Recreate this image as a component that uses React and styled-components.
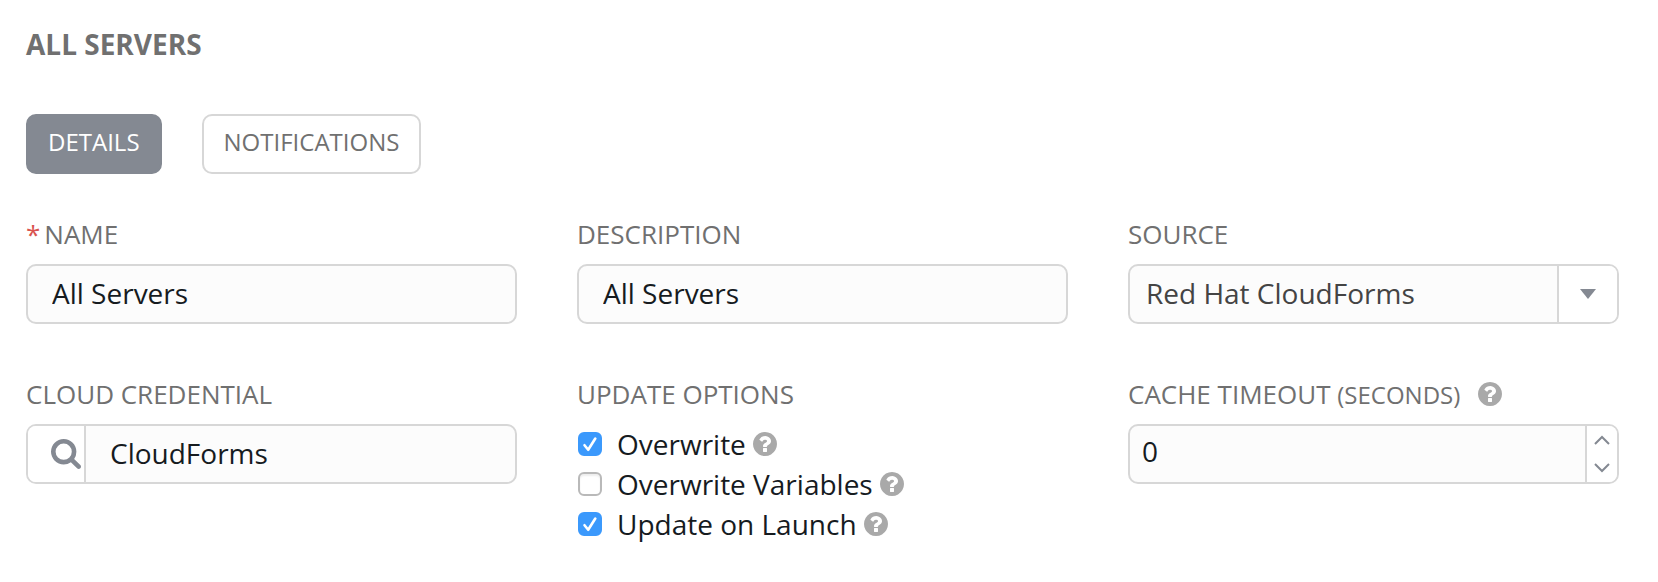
import React, { useState } from "react";
import styled, { createGlobalStyle, css } from "styled-components";

const GlobalStyle = createGlobalStyle`
  *, *::before, *::after { box-sizing: border-box; }
  body {
    margin: 0;
    background: #fff;
    color: #161b1f;
    font-family: "Open Sans", "Noto Sans", sans-serif;
    font-size: 28px;
  }
  button, input, select { font: inherit; color: inherit; margin: 0; }
`;

const Page = styled.main`
  padding: 24px 39px 24px 26px;
`;

const Title = styled.h1`
  margin: 0;
  font-size: 28px;
  line-height: 40px;
  font-weight: 700;
  color: #707070;
  text-transform: uppercase;
`;

const Tabs = styled.nav`
  display: flex;
  gap: 40px;
  margin-top: 50px;
`;

const Tab = styled.button`
  height: 60px;
  padding: 0 20px 4px;
  border: 2px solid ${(p) => (p.$active ? "#848992" : "#d7d7d7")};
  border-radius: 10px;
  background: ${(p) => (p.$active ? "#848992" : "#fff")};
  color: ${(p) => (p.$active ? "#fff" : "#707070")};
  font-size: 24px;
  line-height: 32px;
  text-transform: uppercase;
  cursor: pointer;
`;

const Form = styled.form`
  display: grid;
  grid-template-columns: repeat(3, minmax(0, 1fr));
  gap: 52px 60px;
  margin-top: 42px;
`;

const Field = styled.div`
  min-width: 0;
`;

const labelText = css`
  font-size: 26px;
  line-height: 36px;
  color: #707070;
  text-transform: uppercase;
`;

const LabelRow = styled.div`
  display: flex;
  align-items: center;
  gap: 18px;
  height: 36px;
  margin-bottom: 12px;
`;

const Label = styled.label`
  ${labelText}
`;

const Required = styled.span`
  margin-right: 4px;
  color: #d9534f;
`;

const Small = styled.span`
  font-size: 24px;
  line-height: 24px;
`;

const Control = styled.div`
  display: flex;
  height: 60px;
  border: 2px solid #d7d7d7;
  border-radius: 10px;
  background: #fcfcfc;
  overflow: hidden;

  &:focus-within { border-color: #848992; }
`;

const TextInput = styled.input`
  flex: 1;
  min-width: 0;
  padding: 0 24px 2px;
  border: 0;
  outline: 0;
  background: transparent;
`;

const NumberInput = styled(TextInput)`
  padding: 0 12px 6px;
  appearance: textfield;
  -moz-appearance: textfield;

  &::-webkit-inner-spin-button,
  &::-webkit-outer-spin-button { appearance: none; margin: 0; }
`;

const SelectControl = styled(Control)`
  display: grid;
  grid-template-columns: minmax(0, 1fr) 60px;
`;

const Select = styled.select`
  grid-area: 1 / 1 / 2 / 3;
  padding: 0 76px 2px 16px;
  border: 0;
  outline: 0;
  appearance: none;
  background: transparent;
  color: #444;
`;

const SelectArrow = styled.span`
  grid-area: 1 / 2;
  display: flex;
  align-items: center;
  justify-content: center;
  border-left: 2px solid #d7d7d7;
  background: #fff;
  pointer-events: none;
`;

const LookupButton = styled.button`
  display: flex;
  align-items: center;
  justify-content: flex-end;
  width: 58px;
  padding: 0 3px 0 0;
  border: 0;
  border-right: 2px solid #d7d7d7;
  background: #fff;
  color: #848992;
  cursor: pointer;
`;

const Stepper = styled.div`
  display: flex;
  flex-direction: column;
  width: 32px;
  border-left: 2px solid #d7d7d7;
  background: #fff;
`;

const StepButton = styled.button`
  flex: 1;
  display: flex;
  align-items: center;
  justify-content: center;
  padding: 0;
  border: 0;
  background: transparent;
  color: #848992;
  cursor: pointer;
`;

const Options = styled.fieldset`
  min-width: 0;
  margin: 0;
  padding: 0;
  border: 0;
`;

const Legend = styled.legend`
  ${labelText}
  padding: 0;
  margin-bottom: 12px;
`;

const Option = styled.div`
  display: flex;
  align-items: center;
  gap: 7px;
  height: 40px;
`;

const OptionLabel = styled.label`
  display: flex;
  align-items: center;
  gap: 14px;
  line-height: 38px;
  cursor: pointer;
`;

const CheckSlot = styled.span`
  display: grid;
  width: 26px;
  height: 24px;
  padding-left: 1px;

  & > * { grid-area: 1 / 1; }
  svg { pointer-events: none; }
`;

const Checkbox = styled.input`
  width: 24px;
  height: 24px;
  appearance: none;
  border: 2px solid #b9b9b9;
  border-radius: 6px;
  background: #fff;
  box-shadow: inset 0 2px 2px #eee;

  &:checked {
    border-color: #3b99fc;
    background: #3b99fc;
    box-shadow: none;
  }
`;

const HelpButton = styled.button`
  display: flex;
  padding: 0;
  border: 0;
  background: none;
  color: #a9a9a9;
  cursor: pointer;
`;

const Help = ({ topic }) => (
  <HelpButton type="button" aria-label={`Help: ${topic}`}>
    <svg width="24" height="24" viewBox="128 128 1536 1536" fill="currentColor" aria-hidden="true">
      <path d="M1024 1376v-192q0-14-9-23t-23-9h-192q-14 0-23 9t-9 23v192q0 14 9 23t23 9h192q14 0 23-9t9-23zm256-672q0-88-55.5-163t-138.5-116-170-41q-243 0-371 213-15 24 8 42l132 100q7 6 19 6 16 0 25-12 53-68 86-92 34-24 86-24 48 0 85.5 26t37.5 59q0 38-20 61t-68 45q-63 28-115.5 86.5t-52.5 125.5v36q0 14 9 23t23 9h192q14 0 23-9t9-23q0-19 21.5-49.5t54.5-49.5q32-18 49-28.5t46-35 44.5-48 28-60.5 12.5-81zm384 192q0 209-103 385.5t-279.5 279.5-385.5 103-385.5-103-279.5-279.5-103-385.5 103-385.5 279.5-279.5 385.5-103 385.5 103 279.5 279.5 103 385.5z" />
    </svg>
  </HelpButton>
);

const SearchIcon = () => (
  <svg width="30" height="30" viewBox="64 128 1664 1664" fill="currentColor" aria-hidden="true">
    <path d="M1216 832q0-185-131.5-316.5t-316.5-131.5-316.5 131.5-131.5 316.5 131.5 316.5 316.5 131.5 316.5-131.5 131.5-316.5zm512 832q0 52-38 90t-90 38q-54 0-90-38l-343-342q-179 124-399 124-143 0-273.5-55.5t-225-150-150-225-55.5-273.5 55.5-273.5 150-225 225-150 273.5-55.5 273.5 55.5 225 150 150 225 55.5 273.5q0 220-124 399l343 343q37 37 37 90z" />
  </svg>
);

const Chevron = ({ down }) => (
  <svg width="16" height="10" viewBox="0 0 16 10" fill="none" stroke="currentColor" strokeWidth="2" aria-hidden="true">
    <path d={down ? "M1 1l7 7 7-7" : "M1 9l7-7 7 7"} />
  </svg>
);

const OPTIONS = [
  { id: "overwrite", label: "Overwrite", checked: true },
  { id: "overwrite-vars", label: "Overwrite Variables", checked: false },
  { id: "update-launch", label: "Update on Launch", checked: true },
];

function CheckOption({ id, label, checked: initial }) {
  const [checked, setChecked] = useState(initial);
  return (
    <Option>
      <OptionLabel htmlFor={id}>
        <CheckSlot>
          <Checkbox id={id} type="checkbox" checked={checked} onChange={(e) => setChecked(e.target.checked)} />
          {checked && (
            <svg width="24" height="24" viewBox="0 0 24 24" fill="none" stroke="#fff" strokeWidth="2.6" strokeLinecap="round" strokeLinejoin="round" aria-hidden="true">
              <path d="M6.5 13.2l3.7 4.6L17.3 6.5" />
            </svg>
          )}
        </CheckSlot>
        {label}
      </OptionLabel>
      <Help topic={label} />
    </Option>
  );
}

export default function App() {
  const [tab, setTab] = useState("Details");
  const [timeout, setCacheTimeout] = useState(0);

  return (
    <>
      <GlobalStyle />
      <Page>
        <Title>All Servers</Title>
        <Tabs>
          {["Details", "Notifications"].map((name) => (
            <Tab key={name} type="button" $active={tab === name} onClick={() => setTab(name)}>
              {name}
            </Tab>
          ))}
        </Tabs>
        <Form onSubmit={(e) => e.preventDefault()}>
          <Field>
            <LabelRow>
              <Label htmlFor="name"><Required>*</Required>Name</Label>
            </LabelRow>
            <Control>
              <TextInput id="name" type="text" defaultValue="All Servers" required />
            </Control>
          </Field>
          <Field>
            <LabelRow>
              <Label htmlFor="description">Description</Label>
            </LabelRow>
            <Control>
              <TextInput id="description" type="text" defaultValue="All Servers" />
            </Control>
          </Field>
          <Field>
            <LabelRow>
              <Label htmlFor="source">Source</Label>
            </LabelRow>
            <SelectControl>
              <Select id="source" defaultValue="cloudforms">
                <option value="cloudforms">Red Hat CloudForms</option>
              </Select>
              <SelectArrow>
                <svg width="16" height="10" viewBox="0 0 16 10" fill="#848992" aria-hidden="true">
                  <path d="M0 0h16L8 10z" />
                </svg>
              </SelectArrow>
            </SelectControl>
          </Field>
          <Field>
            <LabelRow>
              <Label htmlFor="credential">Cloud Credential</Label>
            </LabelRow>
            <Control>
              <LookupButton type="button" aria-label="Look up credential">
                <SearchIcon />
              </LookupButton>
              <TextInput id="credential" type="text" defaultValue="CloudForms" />
            </Control>
          </Field>
          <Options>
            <Legend>Update Options</Legend>
            {OPTIONS.map((o) => (
              <CheckOption key={o.id} {...o} />
            ))}
          </Options>
          <Field>
            <LabelRow>
              <Label htmlFor="timeout">Cache Timeout <Small>(seconds)</Small></Label>
              <Help topic="Cache Timeout" />
            </LabelRow>
            <Control>
              <NumberInput
                id="timeout"
                type="number"
                min="0"
                value={timeout}
                onChange={(e) => setCacheTimeout(Number(e.target.value))}
              />
              <Stepper>
                <StepButton type="button" aria-label="Increase" onClick={() => setCacheTimeout(timeout + 1)}>
                  <Chevron />
                </StepButton>
                <StepButton type="button" aria-label="Decrease" onClick={() => setCacheTimeout(Math.max(0, timeout - 1))}>
                  <Chevron down />
                </StepButton>
              </Stepper>
            </Control>
          </Field>
        </Form>
      </Page>
    </>
  );
}
